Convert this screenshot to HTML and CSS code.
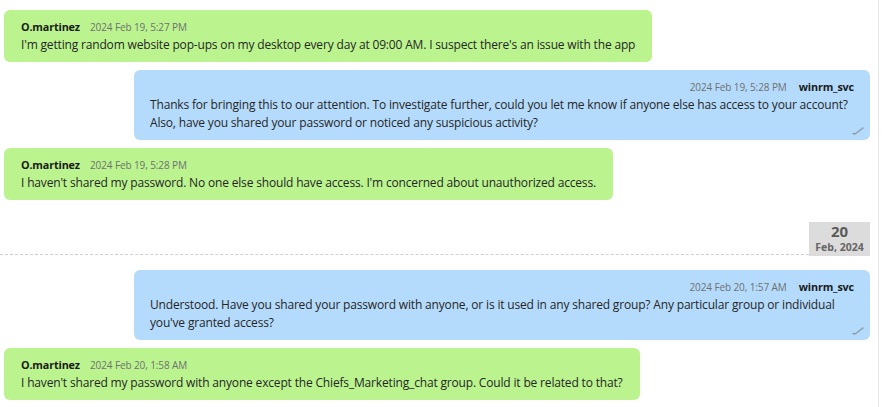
FILE: index.html
```html
<!DOCTYPE html>
<html>
<head>
<meta charset="utf-8">
<link rel="stylesheet" href="styles.css">
</head>
<body>
<div class="chat">
  <div class="msg in">
    <div class="head"><span class="name">O.martinez</span><span class="time">2024 Feb 19, 5:27 PM</span></div>
    <div class="text">I'm getting random website pop-ups on my desktop every day at 09:00 AM. I suspect there's an issue with the app</div>
  </div>
  <div class="msg out">
    <div class="head"><span class="time">2024 Feb 19, 5:28 PM</span><span class="name">winrm_svc</span></div>
    <div class="text">Thanks for bringing this to our attention. To investigate further, could you let me know if anyone else has access to your account? Also, have you shared your password or noticed any suspicious activity?</div>
    <svg class="tick" width="12" height="8" viewBox="0 0 12 8"><path d="M1 6.5 L2.5 7 M3 7 L11 1" stroke="#8a9aa8" stroke-width="1.4" fill="none" stroke-linecap="round"/></svg>
  </div>
  <div class="msg in">
    <div class="head"><span class="name">O.martinez</span><span class="time">2024 Feb 19, 5:28 PM</span></div>
    <div class="text">I haven't shared my password. No one else should have access. I'm concerned about unauthorized access.</div>
  </div>
  <div class="sep">
    <div class="line"></div>
    <div class="date"><div class="day">20</div><div class="month">Feb, 2024</div></div>
  </div>
  <div class="msg out">
    <div class="head"><span class="time">2024 Feb 20, 1:57 AM</span><span class="name">winrm_svc</span></div>
    <div class="text">Understood. Have you shared your password with anyone, or is it used in any shared group? Any particular group or individual you've granted access?</div>
    <svg class="tick" width="12" height="8" viewBox="0 0 12 8"><path d="M1 6.5 L2.5 7 M3 7 L11 1" stroke="#8a9aa8" stroke-width="1.4" fill="none" stroke-linecap="round"/></svg>
  </div>
  <div class="msg in">
    <div class="head"><span class="name">O.martinez</span><span class="time">2024 Feb 20, 1:58 AM</span></div>
    <div class="text">I haven't shared my password with anyone except the Chiefs_Marketing_chat group. Could it be related to that?</div>
  </div>
</div>
</body>
</html>
```

FILE: styles.css
```css
html, body {
  margin: 0;
  padding: 0;
  background: #ffffff;
}
body {
  font-family: "Open Sans", "Noto Sans", sans-serif;
  color: #262626;
}
.chat {
  width: 879px;
  height: 407px;
  border-right: 1px solid #e6e6e6;
  padding-top: 10px;
  box-sizing: border-box;
  display: flex;
  flex-direction: column;
  gap: 8px;
}
.msg {
  position: relative;
  border-radius: 6px;
  padding: 8px 17px 8px 17px;
  box-sizing: border-box;
}
.msg.in {
  align-self: flex-start;
  margin-left: 4px;
  background: #bbf48f;
  max-width: 736px;
}
.msg.out {
  align-self: flex-end;
  margin-right: 8px;
  width: 736px;
  background: #b4dbfc;
  padding: 8px 16px 8px 16px;
}
.head {
  height: 18px;
  line-height: 18px;
  display: flex;
  gap: 10px;
  align-items: baseline;
}
.msg.out .head {
  justify-content: flex-end;
  gap: 12px;
}
.name {
  font-weight: 700;
  font-size: 10.8px;
  letter-spacing: -0.15px;
  color: #1a1a1a;
}
.time {
  font-size: 10px;
  letter-spacing: -0.1px;
  color: #707070;
}
.text {
  font-size: 12px;
  letter-spacing: -0.17px;
  line-height: 18px;
}
.tick {
  position: absolute;
  right: 6px;
  bottom: 5px;
}
.sep {
  display: flex;
  align-items: flex-end;
  margin-top: 14px;
  margin-bottom: 6px;
  margin-right: 8px;
}
.line {
  flex: 1;
  border-bottom: 1px dashed #d0d0d0;
  margin-bottom: 1px;
}
.date {
  width: 61px;
  height: 34px;
  background: #dcdcdc;
  text-align: center;
  font-weight: 700;
  color: #5a5a5a;
  padding-top: 1px;
  box-sizing: border-box;
}
.day {
  font-size: 15px;
  line-height: 17px;
}
.month {
  font-size: 10.5px;
  line-height: 14px;
  color: #666;
}
```
